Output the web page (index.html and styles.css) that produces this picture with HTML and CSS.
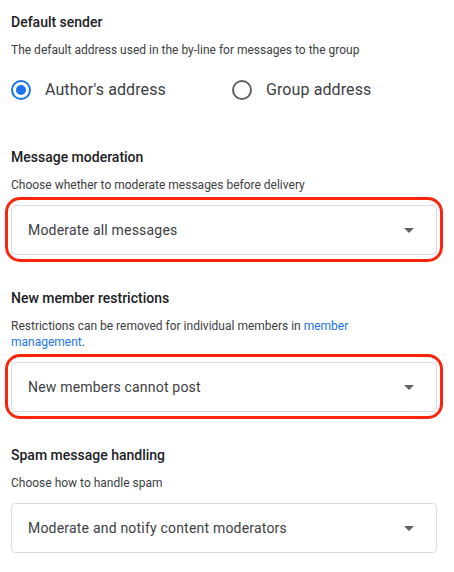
FILE: index.html
```html
<!DOCTYPE html>
<html lang="en">
<head>
<meta charset="utf-8">
<title>Group settings</title>
<link rel="stylesheet" href="styles.css">
</head>
<body>
<main class="settings">
  <section class="setting">
    <h2 class="setting-title">Default sender</h2>
    <p class="setting-desc">The default address used in the by-line for messages to the group</p>
    <div class="radio-group" role="radiogroup">
      <label class="radio-option">
        <span class="radio checked"><span class="radio-dot"></span></span>
        <span class="radio-label">Author's address</span>
      </label>
      <label class="radio-option">
        <span class="radio"></span>
        <span class="radio-label">Group address</span>
      </label>
    </div>
  </section>

  <section class="setting">
    <h2 class="setting-title">Message moderation</h2>
    <p class="setting-desc">Choose whether to moderate messages before delivery</p>
    <div class="select highlighted">
      <span class="select-value">Moderate all messages</span>
      <svg class="select-arrow" viewBox="0 0 24 24" width="24" height="24"><path d="M7 10l5 5 5-5z"/></svg>
    </div>
  </section>

  <section class="setting">
    <h2 class="setting-title">New member restrictions</h2>
    <p class="setting-desc">Restrictions can be removed for individual members in <a class="link" href="#">member management</a>.</p>
    <div class="select highlighted">
      <span class="select-value">New members cannot post</span>
      <svg class="select-arrow" viewBox="0 0 24 24" width="24" height="24"><path d="M7 10l5 5 5-5z"/></svg>
    </div>
  </section>

  <section class="setting">
    <h2 class="setting-title">Spam message handling</h2>
    <p class="setting-desc">Choose how to handle spam</p>
    <div class="select">
      <span class="select-value">Moderate and notify content moderators</span>
      <svg class="select-arrow" viewBox="0 0 24 24" width="24" height="24"><path d="M7 10l5 5 5-5z"/></svg>
    </div>
  </section>
</main>
</body>
</html>
```

FILE: styles.css
```css
html, body {
  margin: 0;
  padding: 0;
  background: #ffffff;
}

body {
  font-family: Roboto, "Liberation Sans", Arial, sans-serif;
  color: #202124;
}

.settings {
  width: 426px;
  padding: 12px 0 0 11px;
  display: flex;
  flex-direction: column;
  gap: 33px;
}

.setting {
  display: flex;
  flex-direction: column;
}

.setting-title {
  margin: 0;
  font-size: 14px;
  line-height: 20px;
  font-weight: 500;
  color: #202124;
}

.setting-desc {
  margin: 10px 0 0;
  max-width: 360px;
  font-size: 12px;
  line-height: 16px;
  color: #3c4043;
}

.link {
  color: #1a73e8;
  text-decoration: none;
}

.radio-group {
  margin-top: 8px;
  height: 48px;
  display: flex;
  align-items: center;
}

.radio-option {
  display: flex;
  align-items: center;
  gap: 14px;
  flex: 0 0 221px;
}

.radio {
  box-sizing: border-box;
  flex: none;
  width: 20px;
  height: 20px;
  border: 2px solid #5f6368;
  border-radius: 50%;
  display: flex;
  align-items: center;
  justify-content: center;
}

.radio.checked {
  border-color: #1a73e8;
}

.radio-dot {
  width: 10px;
  height: 10px;
  border-radius: 50%;
  background: #1a73e8;
}

.radio-label {
  font-size: 16px;
  line-height: 24px;
  letter-spacing: 0.1px;
  color: #3c4043;
}

.select {
  position: relative;
  box-sizing: border-box;
  margin-top: 12px;
  height: 50px;
  border: 1px solid #dadce0;
  border-radius: 4px;
  display: flex;
  align-items: center;
  justify-content: space-between;
  padding: 0 15px 0 16px;
}

.select-value {
  font-size: 14px;
  line-height: 20px;
  letter-spacing: 0.2px;
  color: #3c4043;
}

.select-arrow {
  fill: #5f6368;
  flex: none;
}

.select.highlighted::after {
  content: "";
  position: absolute;
  top: -9px;
  left: -7px;
  right: -7px;
  bottom: -8px;
  border: 3px solid #f7260c;
  border-radius: 15px;
  pointer-events: none;
}
```
